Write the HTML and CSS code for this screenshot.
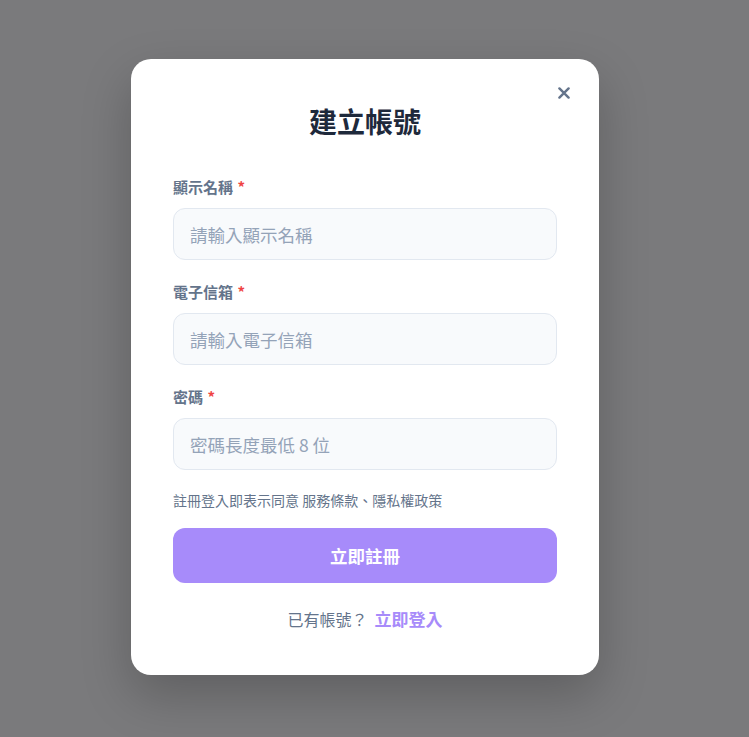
FILE: index.html
```html
<!DOCTYPE html>
<html lang="zh-Hant">
<head>
<meta charset="utf-8">
<title>建立帳號</title>
<link rel="stylesheet" href="styles.css">
</head>
<body>
<div class="overlay">
  <div class="modal">
    <button class="close" aria-label="關閉">
      <svg width="12" height="12" viewBox="0 0 12 12"><path d="M1.4 1.4 L10.6 10.6 M10.6 1.4 L1.4 10.6" stroke="currentColor" stroke-width="2.4" stroke-linecap="round" fill="none"/></svg>
    </button>
    <h1 class="title">建立帳號</h1>
    <form class="form">
      <div class="field">
        <label class="label">顯示名稱 <span class="req">*</span></label>
        <input class="input" type="text" placeholder="請輸入顯示名稱">
      </div>
      <div class="field">
        <label class="label">電子信箱 <span class="req">*</span></label>
        <input class="input" type="email" placeholder="請輸入電子信箱">
      </div>
      <div class="field">
        <label class="label">密碼 <span class="req">*</span></label>
        <input class="input" type="password" placeholder="密碼長度最低 8 位">
      </div>
      <p class="terms">註冊登入即表示同意 服務條款、隱私權政策</p>
      <button type="button" class="submit">立即註冊</button>
    </form>
    <p class="footer">已有帳號？<a class="login">立即登入</a></p>
  </div>
</div>
</body>
</html>
```

FILE: styles.css
```css
* { box-sizing: border-box; }
html, body { margin: 0; padding: 0; height: 100%; }
body {
  font-family: "Noto Sans CJK TC", "Noto Sans", sans-serif;
  background: #7a7a7c;
}
.overlay {
  height: 100%;
  display: flex;
  align-items: center;
  justify-content: center;
  padding-right: 19px;
  padding-bottom: 3px;
}
.modal {
  position: relative;
  width: 468px;
  background: #ffffff;
  border-radius: 20px;
  padding: 45px 42px 44px;
  box-shadow: 0 20px 50px rgba(0, 0, 0, 0.22);
}
.close {
  position: absolute;
  top: 28px;
  right: 29px;
  width: 12px;
  height: 12px;
  padding: 0;
  border: 0;
  background: none;
  color: #64748b;
  display: flex;
  cursor: pointer;
}
.title {
  margin: 0 0 38px;
  font-size: 28px;
  line-height: 34px;
  font-weight: 700;
  color: #1e293b;
  text-align: center;
}
.form { display: flex; flex-direction: column; margin: 0; }
.field { display: flex; flex-direction: column; margin-bottom: 21px; }
.field:nth-child(3) { margin-bottom: 20px; }
.label {
  font-size: 15px;
  line-height: 22px;
  font-weight: 700;
  color: #64748b;
  margin-bottom: 10px;
}
.req { color: #ef4444; margin-left: 1px; }
.input {
  height: 52px;
  width: 100%;
  border: 1px solid #e2e8f0;
  background: #f8fafc;
  border-radius: 12px;
  padding: 0 16px;
  font-family: inherit;
  font-size: 17.5px;
  color: #1e293b;
  outline: none;
}
.input::placeholder { color: #94a3b8; }
.terms {
  margin: 0 0 18px;
  font-size: 14px;
  line-height: 20px;
  color: #64748b;
}
.submit {
  height: 55px;
  width: 100%;
  border: 0;
  border-radius: 12px;
  background: #a78bfa;
  color: #ffffff;
  font-family: inherit;
  font-size: 17.5px;
  font-weight: 700;
  cursor: pointer;
}
.footer {
  margin: 24px 0 0;
  text-align: center;
  font-size: 16px;
  line-height: 24px;
  color: #64748b;
}
.login {
  margin-left: 7px;
  font-size: 17px;
  font-weight: 700;
  color: #a78bfa;
  cursor: pointer;
}
```
